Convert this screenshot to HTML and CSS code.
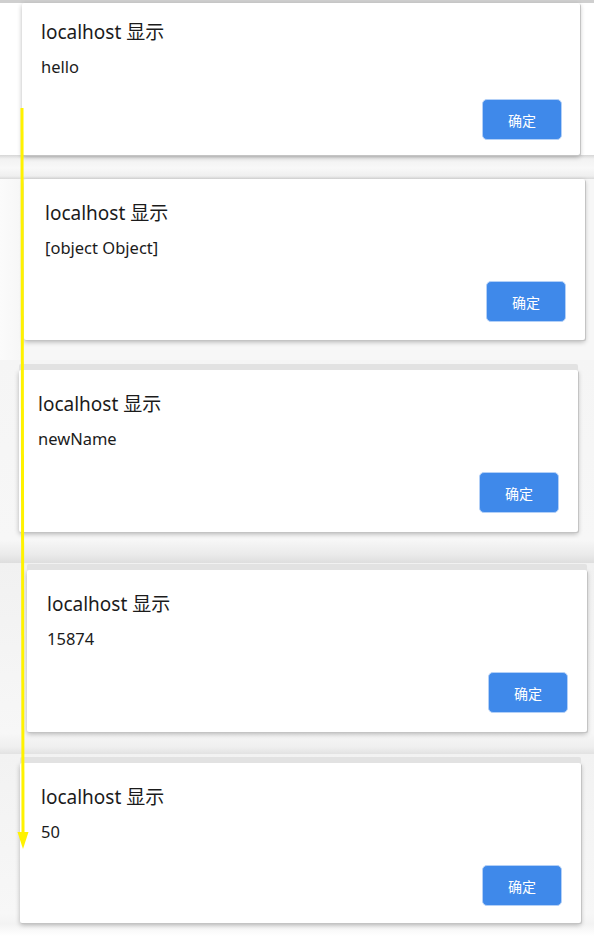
FILE: index.html
```html
<!DOCTYPE html>
<html lang="zh-CN">
<head>
<meta charset="utf-8">
<title>alerts</title>
<link rel="stylesheet" href="styles.css">
</head>
<body>
<main class="page">
  <section class="shot shot-1">
    <div class="dialog d1">
      <div class="title">localhost 显示</div>
      <div class="msg">hello</div>
      <button class="ok">确定</button>
    </div>
  </section>
  <section class="shot shot-2">
    <div class="dialog d2">
      <div class="title">localhost 显示</div>
      <div class="msg">[object Object]</div>
      <button class="ok">确定</button>
    </div>
  </section>
  <section class="shot shot-3">
    <div class="dialog d3 framed">
      <div class="title">localhost 显示</div>
      <div class="msg">newName</div>
      <button class="ok">确定</button>
    </div>
  </section>
  <section class="shot shot-4">
    <div class="dialog d4 framed">
      <div class="title">localhost 显示</div>
      <div class="msg">15874</div>
      <button class="ok">确定</button>
    </div>
  </section>
  <section class="shot shot-5">
    <div class="dialog d5 framed">
      <div class="title">localhost 显示</div>
      <div class="msg">50</div>
      <button class="ok">确定</button>
    </div>
  </section>
  <svg class="arrow" width="20" height="760" viewBox="0 0 20 760" aria-hidden="true">
    <line x1="7" y1="0" x2="8" y2="728" stroke="#fff200" stroke-width="3"/>
    <polygon points="2.5,724 13.5,724 8,741" fill="#fff200"/>
  </svg>
</main>
</body>
</html>
```
FILE: styles.css
```css
html, body {
  margin: 0;
  padding: 0;
  background: #ffffff;
}
.page {
  position: relative;
  width: 594px;
  height: 936px;
  overflow: hidden;
  display: flex;
  flex-direction: column;
  font-family: "Noto Sans", "Noto Sans CJK SC", sans-serif;
}
.shot {
  display: flex;
  flex-direction: column;
  box-sizing: border-box;
}
.shot-1 {
  height: 179px;
  padding: 3px 0 0 22px;
  background:
    linear-gradient(to bottom, #cfcfcf 0, #cfcfcf 3px, transparent 3px),
    linear-gradient(to bottom, #ffffff 0, #ffffff 155px, #d6d6d6 155px, #f2f2f2 159px, #f8f8f8 168px, #efefef 176px, #d9d9d9 179px);
}
.shot-2 {
  height: 181px;
  padding: 0 0 0 24px;
  background: linear-gradient(to right, #fbfbfb 0, #f7f7f7 20px, #f7f7f7 100%);
}
.shot-3 {
  height: 203px;
  padding: 10px 0 0 19px;
  background: linear-gradient(to bottom, #f5f5f5 0, #f7f7f7 180px, #eaeaea 195px, #dedede 203px);
}
.shot-4 {
  height: 191px;
  padding: 7px 0 0 27px;
  background: linear-gradient(to bottom, #f1f1f1 0, #f7f7f7 170px, #efefef 184px, #e2e2e2 191px);
}
.shot-5 {
  height: 182px;
  padding: 9px 0 0 20px;
  background: linear-gradient(to bottom, #f2f2f2 0, #f7f7f7 160px, #f3f3f3 170px, #ffffff 182px);
}
.dialog {
  box-sizing: border-box;
  display: flex;
  flex-direction: column;
  align-items: flex-start;
  background: #ffffff;
  padding: 17px 18px 15px 19px;
  box-shadow: 1px 1px 0 #c4c4c4, 0 2px 5px rgba(0, 0, 0, 0.28);
  border-radius: 2px;
}
.framed {
  box-shadow: 0 -6px 0 #e2e2e2, 1px 1px 0 #c4c4c4, 0 2px 5px rgba(0, 0, 0, 0.28);
}
.d1 { width: 558px; height: 152px; }
.d2 { width: 561px; height: 161px; padding-top: 22px; padding-left: 21px; padding-right: 19px; padding-bottom: 18px; }
.d3 { width: 559px; height: 162px; padding-top: 22px; padding-right: 19px; padding-bottom: 19px; }
.d4 { width: 560px; height: 162px; padding-top: 22px; padding-left: 20px; padding-right: 19px; padding-bottom: 19px; }
.d5 { width: 561px; height: 160px; padding-top: 22px; padding-left: 21px; padding-right: 19px; padding-bottom: 17px; }
.title {
  font-size: 19px;
  line-height: 25px;
  color: #1b1b1b;
}
.msg {
  margin-top: 11px;
  font-size: 16.5px;
  line-height: 22px;
  color: #1b1b1b;
}
.ok {
  margin-top: auto;
  align-self: flex-end;
  width: 80px;
  height: 41px;
  border: 1px solid #b3d0f7;
  border-radius: 5px;
  background: #3f89ea;
  color: #ffffff;
  font-family: "Noto Sans CJK SC", sans-serif;
  font-size: 14px;
  line-height: 20px;
  padding: 0;
}
.arrow {
  position: absolute;
  left: 15px;
  top: 108px;
}
```
